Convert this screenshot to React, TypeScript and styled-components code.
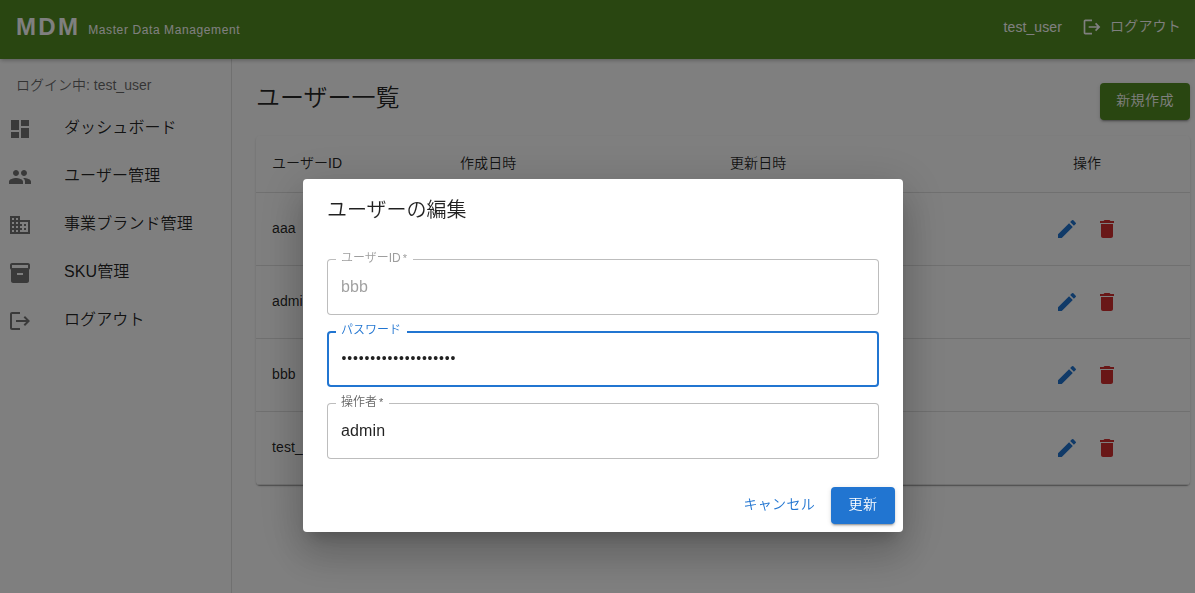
import React from "react";
import styled, { createGlobalStyle, css } from "styled-components";
import {
  MdDashboard,
  MdPeople,
  MdBusiness,
  MdInventory2,
  MdLogout,
  MdEdit,
  MdDelete,
} from "react-icons/md";

const GlobalStyle = createGlobalStyle`
  *, *::before, *::after { box-sizing: border-box; }
  body {
    margin: 0;
    overflow: hidden;
    background: #fff;
    color: rgba(0, 0, 0, 0.87);
    font-family: "Liberation Sans", "Noto Sans CJK JP", sans-serif;
    font-size: 14px;
    font-weight: 350;
    line-height: 1.5;
  }
  button { font: inherit; }
`;

const Page = styled.div`
  display: flex;
  flex-direction: column;
  height: 593px;
  overflow: hidden;
`;

const Header = styled.header`
  display: flex;
  flex: none;
  height: 59px;
  padding: 0 14px 5px 16px;
  align-items: center;
  justify-content: space-between;
  background: #538d22;
  color: #fff;
  z-index: 1;
  box-shadow: 0 2px 4px -1px rgba(0, 0, 0, 0.2), 0 1px 5px rgba(0, 0, 0, 0.12);
`;

const Brand = styled.div`
  display: flex;
  align-items: flex-start;
  gap: 8px;
`;

const Logo = styled.h1`
  margin: 0;
  font-size: 24px;
  font-weight: 700;
  line-height: 32px;
  letter-spacing: 2.3px;
`;

const Tagline = styled.span`
  padding-top: 10px;
  font-size: 12px;
  line-height: 18px;
  letter-spacing: 0.6px;
`;

const Account = styled.div`
  display: flex;
  align-items: center;
  gap: 20px;
  letter-spacing: 0.1px;
`;

const LogoutButton = styled.button`
  display: flex;
  align-items: center;
  gap: 8px;
  padding: 0;
  border: 0;
  background: none;
  color: inherit;
  letter-spacing: 0.2px;

  span {
    padding-bottom: 2px;
  }
`;

const Body = styled.div`
  display: flex;
  flex: 1;
  min-height: 0;
`;

const Sidebar = styled.nav`
  flex: none;
  width: 232px;
  border-right: 1px solid rgba(0, 0, 0, 0.12);
`;

const SignedIn = styled.p`
  margin: 0;
  padding: 16px 16px 9px;
  line-height: 20px;
  letter-spacing: 0;
  color: rgba(0, 0, 0, 0.6);
`;

const NavItem = styled.a`
  display: flex;
  align-items: center;
  height: 48px;
  padding-left: 8px;
  font-size: 16px;
  letter-spacing: 0.1px;
  line-height: 24px;

  svg {
    width: 24px;
    height: 24px;
    margin: 2px 32px 0 0;
    color: rgba(0, 0, 0, 0.54);
  }
`;

const Main = styled.main`
  flex: 1;
  padding: 24px 5px 0 24px;
`;

const TitleRow = styled.div`
  display: flex;
  justify-content: space-between;
  align-items: flex-start;
  height: 53px;
`;

const PageTitle = styled.h2`
  margin: 0;
  font-size: 24px;
  font-weight: 350;
  line-height: 30px;
`;

const ContainedButton = styled.button<{ $tone: string; $width: number }>`
  width: ${(p) => p.$width}px;
  height: 36.5px;
  padding: 0 0 2px;
  border: 0;
  border-radius: 4px;
  background: ${(p) => p.$tone};
  color: #fff;
  letter-spacing: 0.4px;
  box-shadow: 0 3px 1px -2px rgba(0, 0, 0, 0.2), 0 2px 2px rgba(0, 0, 0, 0.14),
    0 1px 5px rgba(0, 0, 0, 0.12);
`;

const TextButton = styled.button`
  height: 36.5px;
  padding: 0 8px 2px;
  border: 0;
  background: none;
  color: #2175d1;
  letter-spacing: 0.3px;
`;

const TablePaper = styled.section`
  border-radius: 4px;
  box-shadow: 0 2px 1px -1px rgba(0, 0, 0, 0.2), 0 1px 1px rgba(0, 0, 0, 0.14),
    0 1px 3px rgba(0, 0, 0, 0.12);
`;

const Row = styled.div<{ $head?: boolean }>`
  display: grid;
  grid-template-columns: 188px 270px 270px 1fr;
  align-items: center;
  height: ${(p) => (p.$head ? 57 : 73)}px;
  border-bottom: 1px solid #e0e0e0;
  letter-spacing: 0.1px;
`;

const Cell = styled.div`
  padding: 0 16px 2px;
`;

const CenteredCell = styled(Cell)`
  display: flex;
  justify-content: center;
`;

const ActionCell = styled(CenteredCell)`
  padding-bottom: 0;
`;

const IconButton = styled.button<{ $tone: string }>`
  display: flex;
  width: 40px;
  height: 40px;
  padding: 8px;
  border: 0;
  background: none;
  color: ${(p) => p.$tone};

  svg {
    width: 24px;
    height: 24px;
  }
`;

const Backdrop = styled.div`
  position: fixed;
  inset: 0;
  z-index: 10;
  display: flex;
  justify-content: center;
  align-items: flex-start;
  padding: 179px 0 0 11px;
  background: rgba(0, 0, 0, 0.5);
`;

const Dialog = styled.div`
  width: 600px;
  border-radius: 4px;
  background: #fff;
  box-shadow: 0 11px 15px -7px rgba(0, 0, 0, 0.2),
    0 24px 38px 3px rgba(0, 0, 0, 0.14), 0 9px 46px 8px rgba(0, 0, 0, 0.12);
`;

const DialogTitle = styled.h2`
  margin: 0;
  padding: 15px 24px 17px;
  font-size: 20px;
  font-weight: 350;
  line-height: 32px;
`;

const Fields = styled.div`
  display: flex;
  flex-direction: column;
  gap: 16px;
  padding: 16px 24px 20px;
`;

const FieldBox = styled.div<{ $focused?: boolean; $disabled?: boolean }>`
  position: relative;
  height: 56px;
  padding: 0 14px;
  border-radius: 4px;
  box-shadow: inset 0 0 0 1px #bdbdbd;
  font-size: 16px;
  line-height: 56px;
  letter-spacing: 0.15px;
  ${(p) => p.$disabled && css`color: rgba(0, 0, 0, 0.38);`}
  ${(p) => p.$focused && css`box-shadow: inset 0 0 0 2px #2175d1;`}
`;

const Password = styled.span`
  display: block;
  padding-left: 0.5px;
  font-size: 14px;
  line-height: 54px;
  letter-spacing: 0.84px;
`;

const FieldLabel = styled.label<{ $notch: number; $tone: string }>`
  position: absolute;
  top: -10px;
  left: 9px;
  width: ${(p) => p.$notch}px;
  padding-left: 5px;
  background: #fff;
  color: ${(p) => p.$tone};
  font-size: 12px;
  line-height: 18px;
  letter-spacing: 0;
  white-space: nowrap;
`;

const Required = styled.span`
  margin-left: 2px;
  font-size: 11px;
`;

const Actions = styled.div`
  display: flex;
  justify-content: flex-end;
  gap: 8px;
  padding: 8px;
`;

const navItems = [
  { icon: MdDashboard, label: "ダッシュボード" },
  { icon: MdPeople, label: "ユーザー管理" },
  { icon: MdBusiness, label: "事業ブランド管理" },
  { icon: MdInventory2, label: "SKU管理" },
  { icon: MdLogout, label: "ログアウト" },
];

const users = ["aaa", "admin", "bbb", "test_user"];

export default function App() {
  return (
    <>
      <GlobalStyle />
      <Page>
        <Header>
          <Brand>
            <Logo>MDM</Logo>
            <Tagline>Master Data Management</Tagline>
          </Brand>
          <Account>
            <span>test_user</span>
            <LogoutButton>
              <MdLogout size={20} />
              <span>ログアウト</span>
            </LogoutButton>
          </Account>
        </Header>
        <Body>
          <Sidebar>
            <SignedIn>ログイン中: test_user</SignedIn>
            {navItems.map(({ icon: Icon, label }) => (
              <NavItem key={label}>
                <Icon />
                {label}
              </NavItem>
            ))}
          </Sidebar>
          <Main>
            <TitleRow>
              <PageTitle>ユーザー一覧</PageTitle>
              <ContainedButton $tone="#538d22" $width={90}>
                新規作成
              </ContainedButton>
            </TitleRow>
            <TablePaper>
              <Row $head>
                <Cell>ユーザーID</Cell>
                <Cell>作成日時</Cell>
                <Cell>更新日時</Cell>
                <CenteredCell>操作</CenteredCell>
              </Row>
              {users.map((user) => (
                <Row key={user}>
                  <Cell>{user}</Cell>
                  <Cell />
                  <Cell />
                  <ActionCell>
                    <IconButton $tone="#2175d1" aria-label="編集">
                      <MdEdit />
                    </IconButton>
                    <IconButton $tone="#d32f2f" aria-label="削除">
                      <MdDelete />
                    </IconButton>
                  </ActionCell>
                </Row>
              ))}
            </TablePaper>
          </Main>
        </Body>
      </Page>
      <Backdrop>
        <Dialog role="dialog">
          <DialogTitle>ユーザーの編集</DialogTitle>
          <Fields>
            <FieldBox $disabled>
              <FieldLabel $notch={77} $tone="#9e9e9e">
                ユーザーID<Required>*</Required>
              </FieldLabel>
              bbb
            </FieldBox>
            <FieldBox $focused>
              <FieldLabel $notch={71} $tone="#2175d1">
                パスワード
              </FieldLabel>
              <Password>{"•".repeat(20)}</Password>
            </FieldBox>
            <FieldBox>
              <FieldLabel $notch={53} $tone="#666">
                操作者<Required>*</Required>
              </FieldLabel>
              admin
            </FieldBox>
          </Fields>
          <Actions>
            <TextButton>キャンセル</TextButton>
            <ContainedButton $tone="#2175d1" $width={64}>
              更新
            </ContainedButton>
          </Actions>
        </Dialog>
      </Backdrop>
    </>
  );
}
